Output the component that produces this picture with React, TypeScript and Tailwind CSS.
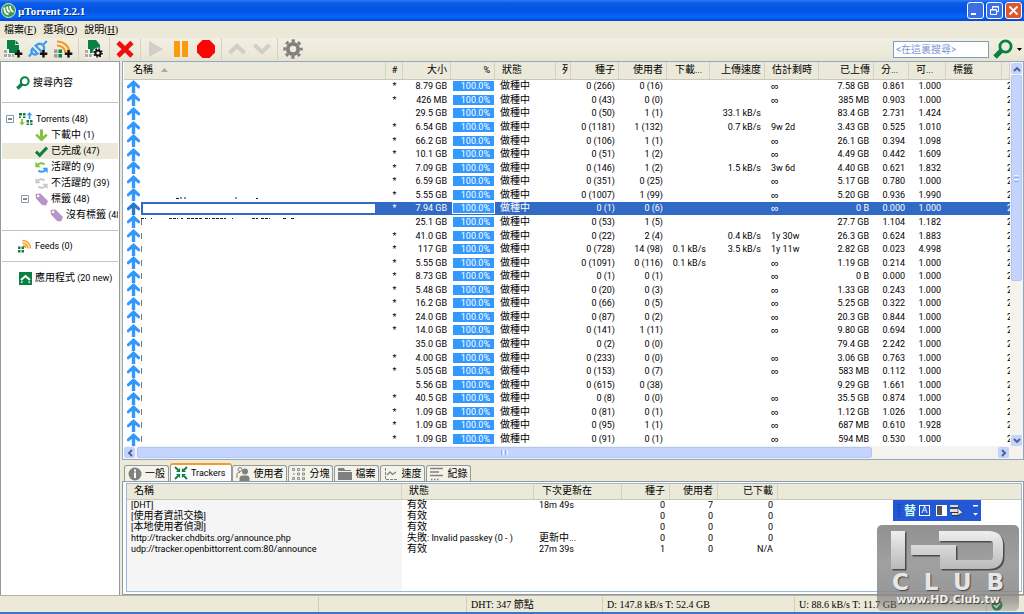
import React from "react";

const CJK = /([\u3000-\u9fff]+)/;

function Mix({ text }: { text: string }) {
  return (
    <>
      {text.split(CJK).map((part, i) =>
        CJK.test(part) ? (
          <span key={i} className="text-[10px] leading-none">
            {part}
          </span>
        ) : (
          part
        ),
      )}
    </>
  );
}

/* ---------- icons ---------- */

const GREEN = "#0b8043";

function Plus() {
  return <path d="M15.500 11v7.500M11.800 14.700h7.500" stroke="#111" strokeWidth="2.400" />;
}

function AddFileIcon() {
  return (
    <svg width="20" height="20" viewBox="0 0 20 20">
      <path d="M4 1h8v5h4v8H4z" fill={GREEN} />
      <path d="M12.500 1L16 5h-3.500z" fill={GREEN} />
      <path d="M1 10h5v4h4v5H1z" fill="#f5f4ee" />
      <path d="M1 11h3v3H1zM1 15h3v3H1zM5 15h3v3H5zM9 15h2v3H9z" fill="#a9a9a9" />
      <Plus />
    </svg>
  );
}

function AddLinkIcon() {
  return (
    <svg width="20" height="20" viewBox="0 0 20 20" fill="none">
      <g stroke="#3d9bf2" strokeWidth="2.200">
        <path d="M.8 17.500L4 14" />
        <path d="M4.500 9.500c-1.500 1.800-1.200 3.800 0 5s3.200 1.300 5 0z" />
        <path d="M7.500 6.800l6.500 6c2.600-2.200 2.800-4.800 1-6.600s-4.800-1.800-7.500.6z" />
        <path d="M15.500 5.500L18.800 2" />
      </g>
      <Plus />
    </svg>
  );
}

function AddFeedIcon() {
  return (
    <svg width="20" height="20" viewBox="0 0 20 20" fill="none">
      <g stroke="#f79a1c" strokeWidth="2.200">
        <path d="M4 2.500c7 0 12.500 5 12.500 12" />
        <path d="M4 6.500c4.500 0 8 3 8.500 7" />
      </g>
      <path d="M1 10.500h3.500V14H1zM1 15h3.500v3.500H1z" fill="#9b9b9b" />
      <path d="M5.500 10.500H9V14H5.500zM5.500 15H9v3.500H5.500z" fill={GREEN} />
      <Plus />
    </svg>
  );
}

function CreateIcon() {
  return (
    <svg width="20" height="20" viewBox="0 0 20 20">
      <path d="M4 1h8l4 5v8H4z" fill={GREEN} />
      <path d="M1 10h5v4h4v5H1z" fill="#f5f4ee" />
      <path d="M1 11h3v3H1zM1 15h3v3H1zM5 15h3v3H5z" fill="#a9a9a9" />
      <circle cx="14" cy="14" r="5.500" fill="#f5f4ee" />
      <circle cx="14" cy="14" r="2.600" fill="none" stroke="#111" strokeWidth="2" />
      <circle cx="14" cy="14" r="4" fill="none" stroke="#111" strokeWidth="1.600" strokeDasharray="1.600 1.540" />
    </svg>
  );
}

function RemoveIcon() {
  return (
    <svg width="18" height="18" viewBox="0 0 18 18">
      <path d="M2 2.500l14 13.500M16 2.500L2 16" stroke="#f10d0d" strokeWidth="4.600" />
    </svg>
  );
}

function PlayIcon() {
  return (
    <svg width="16" height="18" viewBox="0 0 16 18">
      <path d="M1 1l14 8-14 8z" fill="#d0cfca" />
    </svg>
  );
}

function PauseIcon() {
  return (
    <svg width="16" height="18" viewBox="0 0 16 18">
      <path d="M1 1h6v16H1zM9 1h6v16H9z" fill="#fb9a0a" />
    </svg>
  );
}

function StopIcon() {
  return (
    <svg width="18" height="18" viewBox="0 0 18 18">
      <path d="M5.500 0h7L18 5.500v7L12.500 18h-7L0 12.500v-7z" fill="#fb0505" />
    </svg>
  );
}

function ChevronIcon({ down }: { down?: boolean }) {
  return (
    <svg width="20" height="18" viewBox="0 0 20 18" fill="none">
      <path d={down ? "M2.500 5L10 12l7.500-7" : "M2.500 13L10 6l7.500 7"} stroke="#cfcec8" strokeWidth="4" />
    </svg>
  );
}

function GearIcon() {
  return (
    <svg width="20" height="20" viewBox="0 0 20 20" fill="none" stroke="#808080">
      <circle cx="10" cy="10" r="5.200" strokeWidth="3.800" />
      <circle cx="10" cy="10" r="8.400" strokeWidth="2.600" strokeDasharray="3.300 3.297" strokeDashoffset="1.650" />
    </svg>
  );
}

function SearchIcon({ size }: { size: number }) {
  return (
    <svg width={size} height={size} viewBox="0 0 20 20" fill="none" stroke={GREEN}>
      <circle cx="12.500" cy="7.500" r="5.600" strokeWidth="2.800" />
      <path d="M8.500 11.500L2 18" strokeWidth="5" />
    </svg>
  );
}

function LogoIcon() {
  return (
    <svg width="15" height="15" viewBox="0 0 15 15" fill="none">
      <circle cx="7.500" cy="7.500" r="7" fill="#3f9b4d" stroke="#d5ecd2" />
      <path d="M3.200 4.500c.2 5 1.800 7 4.300 6.300M6 3.600c.4 4 1.400 5.400 3 5M9 3c.3 3.600 1.400 5.500 3.500 5.800" stroke="#fff" strokeWidth="1.800" />
    </svg>
  );
}

function ArrowUp({ selected }: { selected?: boolean }) {
  return (
    <svg width="13" height="13" viewBox="0 0 13 13" className="block">
      <path d="M6.500 0L13 6v1.500L12 8.700 8.200 6V13H4.800V6L1 8.700 0 7.500V6z" fill={selected ? "#2a78d0" : "#3398fb"} />
    </svg>
  );
}

function ArrowDownGreen() {
  return (
    <svg width="13" height="13" viewBox="0 0 13 13">
      <path d="M6.500 12.500L.3 6.500 2 4.800l3 2.400V.5h3v6.700l3-2.400 1.700 1.700z" fill="#83c43c" />
    </svg>
  );
}

function CheckIcon() {
  return (
    <svg width="13" height="13" viewBox="0 0 13 13">
      <path d="M1 6.500l3.700 3.800L12 2.500" fill="none" stroke={GREEN} strokeWidth="3.200" />
    </svg>
  );
}

function CycleIcon({ a, b }: { a: string; b: string }) {
  return (
    <svg width="13" height="13" viewBox="0 0 13 13" fill="none">
      <path d="M2.500 4.300C4 1.800 7.500 1.500 9.500 3.500" stroke={a} strokeWidth="2.100" />
      <path d="M.4.800v5.400h5.400z" fill={a} />
      <path d="M10.500 8.700C9 11.200 5.500 11.500 3.500 9.500" stroke={b} strokeWidth="2.100" />
      <path d="M12.600 12.200V6.800H7.200z" fill={b} />
    </svg>
  );
}

function TagIcon() {
  return (
    <svg width="13" height="13" viewBox="0 0 13 13">
      <path d="M.5 1l5-.5L13 8l-2 4.500-4-.5L1 5.500z" fill="#b795c8" />
      <circle cx="3.200" cy="3" r="1.200" fill="#fff" />
    </svg>
  );
}

function TorrentsIcon() {
  return (
    <svg width="14" height="14" viewBox="0 0 14 14">
      <path d="M0 1h3v2.500H0zM4 1h2.500v2.500H4zM0 4.500h2V6H0zM4 4.500h2.500V6H4zM7.500 8H10v2.500H7.500zM11 8h2.500v2.500H11zM7.500 11.500H10V13H7.500zM11 11.500h2.500V13H11z" fill={GREEN} />
      <path d="M10.500 0l2.800 3.200h-1.900V7H9.600V3.200H7.700z" fill="#3d9bf2" />
      <path d="M3 13.500L.2 10.300h1.900V7h1.800v3.300h1.900z" fill="#83c43c" />
    </svg>
  );
}

function FeedsIcon() {
  return (
    <svg width="14" height="14" viewBox="0 0 14 14" fill="none">
      <path d="M4.500 1.500c4.500 0 8 3.500 8 8M4.500 4c3 0 5.500 2.500 5.500 5.500M5 6.500c1.500 0 2.500 1 2.500 2.500" stroke="#f79a1c" strokeWidth="1.500" />
      <path d="M0 7.500h2.500V10H0zM3.500 7.500H6V10H3.500zM0 11h2.500v2.500H0zM3.500 11H6v2.500H3.500z" fill={GREEN} />
    </svg>
  );
}

function AppsIcon() {
  return (
    <svg width="13" height="13" viewBox="0 0 13 13" fill="none">
      <path d="M0 0h13v13H0z" fill={GREEN} />
      <path d="M2 8l4.500-4L11 8" stroke="#fff" strokeWidth="2" />
      <path d="M2 10.800l1.500-1.500M11 10.800L9.500 9.300" stroke="#fff" strokeWidth="1.200" />
    </svg>
  );
}

function MinusBox() {
  return (
    <svg width="8" height="8" viewBox="0 0 8 8">
      <path d="M.5.5h7v7h-7z" fill="#fff" stroke="#7f9db9" />
      <path d="M2 4h4" stroke="#111" />
    </svg>
  );
}

/* ---------- data ---------- */

type Row = [string, string, string, string, string, string, string, string, string, string];

// marker, size, seeds, peers, down, up, eta, uploaded, ratio, availability
const rows: Row[] = [
  ["*", "8.79 GB", "0 (266)", "0 (16)", "", "", "∞", "7.58 GB", "0.861", "1.000"],
  ["*", "426 MB", "0 (43)", "0 (0)", "", "", "∞", "385 MB", "0.903", "1.000"],
  ["", "29.5 GB", "0 (50)", "1 (1)", "", "33.1 kB/s", "", "83.4 GB", "2.731", "1.424"],
  ["*", "6.54 GB", "0 (1181)", "1 (132)", "", "0.7 kB/s", "9w 2d", "3.43 GB", "0.525", "1.010"],
  ["*", "66.2 GB", "0 (106)", "1 (1)", "", "", "∞", "26.1 GB", "0.394", "1.098"],
  ["*", "10.1 GB", "0 (51)", "1 (2)", "", "", "∞", "4.49 GB", "0.442", "1.609"],
  ["*", "7.09 GB", "0 (146)", "1 (2)", "", "1.5 kB/s", "3w 6d", "4.40 GB", "0.621", "1.832"],
  ["*", "6.59 GB", "0 (351)", "0 (25)", "", "", "∞", "5.17 GB", "0.780", "1.000"],
  ["*", "5.55 GB", "0 (1007)", "1 (99)", "", "", "∞", "5.20 GB", "0.936", "1.990"],
  ["*", "7.94 GB", "0 (1)", "0 (6)", "", "", "∞", "0 B", "0.000", "1.000"],
  ["", "25.1 GB", "0 (53)", "1 (5)", "", "", "", "27.7 GB", "1.104", "1.182"],
  ["*", "41.0 GB", "0 (22)", "2 (4)", "", "0.4 kB/s", "1y 30w", "26.3 GB", "0.624", "1.883"],
  ["*", "117 GB", "0 (728)", "14 (98)", "0.1 kB/s", "3.5 kB/s", "1y 11w", "2.82 GB", "0.023", "4.998"],
  ["*", "5.55 GB", "0 (1091)", "0 (116)", "0.1 kB/s", "", "∞", "1.19 GB", "0.214", "1.000"],
  ["*", "8.73 GB", "0 (1)", "0 (1)", "", "", "∞", "0 B", "0.000", "1.000"],
  ["*", "5.48 GB", "0 (20)", "0 (3)", "", "", "∞", "1.33 GB", "0.243", "1.000"],
  ["*", "16.2 GB", "0 (66)", "0 (5)", "", "", "∞", "5.25 GB", "0.322", "1.000"],
  ["*", "24.0 GB", "0 (87)", "0 (2)", "", "", "∞", "20.3 GB", "0.844", "1.000"],
  ["*", "14.0 GB", "0 (141)", "1 (11)", "", "", "∞", "9.80 GB", "0.694", "1.000"],
  ["", "35.0 GB", "0 (2)", "0 (0)", "", "", "", "79.4 GB", "2.242", "1.000"],
  ["*", "4.00 GB", "0 (233)", "0 (0)", "", "", "∞", "3.06 GB", "0.763", "1.000"],
  ["*", "5.05 GB", "0 (153)", "0 (7)", "", "", "∞", "583 MB", "0.112", "1.000"],
  ["", "5.56 GB", "0 (615)", "0 (38)", "", "", "", "9.29 GB", "1.661", "1.000"],
  ["*", "40.5 GB", "0 (8)", "0 (0)", "", "", "∞", "35.5 GB", "0.874", "1.000"],
  ["*", "1.09 GB", "0 (81)", "0 (1)", "", "", "∞", "1.12 GB", "1.026", "1.000"],
  ["*", "1.09 GB", "0 (95)", "1 (1)", "", "", "∞", "687 MB", "0.610", "1.928"],
  ["*", "1.09 GB", "0 (91)", "0 (1)", "", "", "∞", "594 MB", "0.530", "1.000"],
];

const SELECTED = 9;

const columns: { label: string; width: string; cls: string }[] = [
  { label: "名稱", width: "w-auto", cls: "pl-[9px] text-left" },
  { label: "#", width: "w-[17px]", cls: "text-center" },
  { label: "大小", width: "w-[48px]", cls: "pr-1 text-right" },
  { label: "%", width: "w-[44px]", cls: "pr-[5px] text-right" },
  { label: "狀態", width: "w-[61px]", cls: "pl-[7px] text-left" },
  { label: "列", width: "w-[15px]", cls: "pl-[6px] pr-[3px]" },
  { label: "種子", width: "w-[48px]", cls: "pr-1 text-right" },
  { label: "使用者", width: "w-[48px]", cls: "pr-1 text-right" },
  { label: "下載...", width: "w-[43px]", cls: "pl-[8px] text-left" },
  { label: "上傳速度", width: "w-[55px]", cls: "pr-1 text-right" },
  { label: "估計剩時", width: "w-[54px]", cls: "pl-[7px] text-left" },
  { label: "已上傳", width: "w-[55px]", cls: "pr-1 text-right" },
  { label: "分...", width: "w-[35px]", cls: "pl-[7px] text-left" },
  { label: "可...", width: "w-[37px]", cls: "pl-[7px] text-left" },
  { label: "標籤", width: "w-[56px]", cls: "pl-[7px] text-left" },
  { label: "", width: "w-[8px]", cls: "" },
];

const trackers = [
  ["[DHT]", "有效", "18m 49s", "0", "7", "0"],
  ["[使用者資訊交換]", "有效", "", "0", "0", "0"],
  ["[本地使用者偵測]", "有效", "", "0", "0", "0"],
  ["http://tracker.chdbits.org/announce.php", "失敗: Invalid passkey (0 - )", "更新中...", "0", "0", "0"],
  ["udp://tracker.openbittorrent.com:80/announce", "有效", "27m 39s", "1", "0", "N/A"],
];

const trackerColumns = [
  { label: "名稱", width: "w-[275px]", cls: "pl-[7px] text-left" },
  { label: "狀態", width: "w-[132px]", cls: "pl-[7px] text-left" },
  { label: "下次更新在", width: "w-[88px]", cls: "pl-[8px] text-left" },
  { label: "種子", width: "w-[48px]", cls: "pr-[5px] text-right" },
  { label: "使用者", width: "w-[48px]", cls: "pr-[5px] text-right" },
  { label: "已下載", width: "w-[60px]", cls: "pr-[5px] text-right" },
];

/* ---------- sections ---------- */

function TitleBar() {
  return (
    <header className="flex h-[21px] shrink-0 items-center gap-[2px] bg-[linear-gradient(to_bottom,#2f7bf5_0px,#0a5bea_3px,#0453e0_10px,#0565fb_17px,#0347c8_21px)] pr-[2px] pl-[1px]">
      <LogoIcon />
      <h1 className="grow font-['Liberation_Serif',serif] text-[11px] leading-[14px] font-bold text-white [text-shadow:1px_1px_0_#0a2f8a]">
        µTorrent 2.2.1
      </h1>
      <div className="flex gap-[2px]">
        <button aria-label="Minimize" className="flex size-[17px] items-center justify-center rounded-[3px] border border-white bg-[#3c6fe6]">
          <svg width="11" height="11" viewBox="0 0 11 11">
            <path d="M1 9h5" stroke="#fff" strokeWidth="2" />
          </svg>
        </button>
        <button aria-label="Restore" className="flex size-[17px] items-center justify-center rounded-[3px] border border-white bg-[#3c6fe6]">
          <svg width="11" height="11" viewBox="0 0 11 11" fill="none" stroke="#fff">
            <path d="M3.500 4V1.500h6v5H7.500M3.500 2h6" />
            <path d="M1.500 4.500h6v5h-6zM1.500 5h6" />
          </svg>
        </button>
        <button aria-label="Close" className="flex size-[17px] items-center justify-center rounded-[3px] border border-white bg-[#dd5630]">
          <svg width="11" height="11" viewBox="0 0 11 11">
            <path d="M1.500 1.500l8 8M9.500 1.500l-8 8" stroke="#fff" strokeWidth="1.800" />
          </svg>
        </button>
      </div>
    </header>
  );
}

function MenuBar() {
  const items = [
    ["檔案", "F"],
    ["選項", "O"],
    ["說明", "H"],
  ];
  return (
    <nav className="flex h-[17px] shrink-0 items-center gap-[7px] bg-[#ece9d8] pl-1">
      {items.map(([label, key]) => (
        <button key={key} className="font-['Liberation_Serif','Noto_Sans_CJK_TC',serif] text-[10px] leading-[16px]">
          {label}(<u>{key}</u>)
        </button>
      ))}
    </nav>
  );
}

function Sep() {
  return <span className="h-[22px] w-px bg-[#d5d2c4]" />;
}

function Tool({ label, children }: { label: string; children: React.ReactNode }) {
  return (
    <button aria-label={label} className="flex w-5 items-center justify-center">
      {children}
    </button>
  );
}

function Toolbar() {
  return (
    <div className="flex h-[23px] shrink-0 items-center bg-[linear-gradient(to_bottom,#f1efe2,#ece9d8_70%,#e6e3d2)] pr-[2px] pb-px pl-[3px]">
      <div className="flex items-center gap-[5px]">
        <Tool label="Add torrent"><AddFileIcon /></Tool>
        <Tool label="Add torrent from URL"><AddLinkIcon /></Tool>
        <Tool label="Add RSS feed"><AddFeedIcon /></Tool>
        <Sep />
        <Tool label="Create torrent"><CreateIcon /></Tool>
        <Sep />
        <Tool label="Remove"><RemoveIcon /></Tool>
        <Sep />
        <Tool label="Start"><PlayIcon /></Tool>
        <Tool label="Pause"><PauseIcon /></Tool>
        <Tool label="Stop"><StopIcon /></Tool>
        <Sep />
        <Tool label="Move up"><ChevronIcon /></Tool>
        <Tool label="Move down"><ChevronIcon down /></Tool>
        <Sep />
        <Tool label="Preferences"><GearIcon /></Tool>
      </div>
      <div className="ml-auto flex items-center gap-1">
        <input
          aria-label="搜尋"
          placeholder="<在這裏搜尋>"
          className="h-[17px] w-[96px] border border-[#7f9db9] bg-white px-[2px] text-[10px] leading-[14px] placeholder:text-[#7f95d6]"
        />
        <button aria-label="Search"><SearchIcon size={20} /></button>
        <svg width="5" height="3" viewBox="0 0 5 3"><path d="M0 0h5L2.500 3z" /></svg>
      </div>
    </div>
  );
}

function TreeItem({
  indent,
  icon,
  label,
  active,
  expandable,
}: {
  indent: string;
  icon: React.ReactNode;
  label: string;
  active?: boolean;
  expandable?: boolean;
}) {
  return (
    <button
      className={`flex h-4 w-full shrink-0 items-center gap-[3px] overflow-hidden whitespace-nowrap ${indent} ${active ? "bg-[#ece9d8]" : ""}`}
    >
      {expandable && <span className="pr-[2px]"><MinusBox /></span>}
      <span className="flex w-[14px] shrink-0 justify-center">{icon}</span>
      <span className="leading-[14px]">
        <Mix text={label} />
      </span>
    </button>
  );
}

function Sidebar() {
  return (
    <aside className="flex w-[120px] shrink-0 flex-col overflow-hidden border-x border-t border-[#8f9ca6] bg-white px-px">
      <div className="border-b border-[#c5c5c0] pt-[13px] pb-[11px]">
        <TreeItem indent="pl-[14px]" icon={<SearchIcon size={14} />} label="搜尋內容" />
      </div>
      <div className="border-b border-[#c5c5c0] pt-[8px] pb-[7px]">
        <TreeItem expandable indent="pl-1" icon={<TorrentsIcon />} label="Torrents (48)" />
        <TreeItem indent="pl-[32px]" icon={<ArrowDownGreen />} label="下載中 (1)" />
        <TreeItem active indent="pl-[32px]" icon={<CheckIcon />} label="已完成 (47)" />
        <TreeItem indent="pl-[32px]" icon={<CycleIcon a="#83c43c" b="#3d9bf2" />} label="活躍的 (9)" />
        <TreeItem indent="pl-[32px]" icon={<CycleIcon a="#c9c9c9" b="#c9c9c9" />} label="不活躍的 (39)" />
        <TreeItem expandable indent="pl-[19px]" icon={<TagIcon />} label="標籤 (48)" />
        <TreeItem indent="pl-[47px]" icon={<TagIcon />} label="沒有標籤 (48)" />
      </div>
      <div className="border-b border-[#c5c5c0] py-[7px]">
        <TreeItem indent="pl-[16px]" icon={<FeedsIcon />} label="Feeds (0)" />
      </div>
      <div className="pt-[8px]">
        <TreeItem indent="pl-[16px]" icon={<AppsIcon />} label="應用程式 (20 new)" />
      </div>
    </aside>
  );
}

function ScrollButton({ label, d }: { label: string; d: string }) {
  return (
    <button aria-label={label} className="flex size-[11px] shrink-0 items-center justify-center rounded-[2px] bg-[#c3d3fd]">
      <svg width="8" height="8" viewBox="0 0 8 8" fill="none">
        <path d={d} stroke="#4d6185" strokeWidth="1.900" />
      </svg>
    </button>
  );
}

// Remnants of the file names that show around the blanked-out area.
function NameRemnants() {
  return (
    <svg width="180" height="24" viewBox="0 0 180 24" className="absolute top-[135px] left-4" fill="none">
      <path d="M36 1.500h3M41 0v2M44 1h2M96 0v2M116 1.500h2" stroke="#222" />
      <path
        d="M1 21.500h5M11 21.500h1M29 21.500h9M41 21.500h2M47 21.500h16M65 21.500h5M72 21.500h14M92 21.500h1M112 21.500h6M121 21.500h9M143 21.500h3M151 21.500h4"
        stroke="#222"
        strokeDasharray="3 1"
      />
    </svg>
  );
}

function NameCell({ index }: { index: number }) {
  const selected = index === SELECTED;
  return (
    <td className="p-0 pl-[3px]">
      <div className="flex items-center gap-px">
        <ArrowUp selected={selected} />
        {selected ? (
          <div className="h-[13px] grow bg-[#316ac5] py-[2px] pr-[11px] pl-[2px]">
            <div className="h-full bg-white" />
          </div>
        ) : (
          index > 9 && <span className="h-[6px] w-px bg-[#777]" />
        )}
      </div>
    </td>
  );
}

function TorrentTable() {
  return (
    <table className="h-full w-full table-fixed border-collapse whitespace-nowrap">
      <colgroup>
        {columns.map((c, i) => (
          <col key={i} className={c.width} />
        ))}
      </colgroup>
      <thead>
        <tr className="h-[17px] bg-[#ebe9da]">
          {columns.map((c, i) => (
            <th
              key={i}
              className={`overflow-hidden border-b border-[#cbc7b8] p-0 leading-[15px] font-normal [box-shadow:inset_-1px_0_0_#d6d2c2] ${c.cls}`}
            >
              {i === 0 ? (
                <span className="inline-flex items-center gap-2">
                  <Mix text={c.label} />
                  <svg width="7" height="4" viewBox="0 0 7 4"><path d="M0 4h7L3.500 0z" fill="#aca899" /></svg>
                </span>
              ) : c.label === "列" ? (
                <div className="overflow-hidden text-left">
                  <Mix text={c.label} />
                </div>
              ) : (
                <Mix text={c.label} />
              )}
            </th>
          ))}
        </tr>
      </thead>
      <tbody>
        {rows.map((r, i) => {
          const sel = i === SELECTED;
          const c = sel ? "bg-[#316ac5] text-white" : "";
          return (
            <tr key={i} className="leading-[12px]">
              <NameCell index={i} />
              <td className={`p-0 text-center ${c}`}>{r[0]}</td>
              <td className={`p-0 pr-1 text-right ${c}`}>{r[1]}</td>
              <td className={`p-0 pr-px pl-[2px] ${c}`}>
                <div className={`h-[10px] bg-[#3399ff] pr-1 text-right leading-[10px] text-white ${sel ? "outline outline-white" : ""}`}>
                  100.0%
                </div>
              </td>
              <td className={`p-0 pl-[5px] ${c}`}><Mix text="做種中" /></td>
              <td className={`p-0 ${c}`} />
              <td className={`p-0 pr-1 text-right ${c}`}>{r[2]}</td>
              <td className={`p-0 pr-1 text-right ${c}`}>{r[3]}</td>
              <td className={`p-0 pr-1 text-right ${c}`}>{r[4]}</td>
              <td className={`p-0 pr-1 text-right ${c}`}>{r[5]}</td>
              <td className={`p-0 pl-[6px] ${r[6] === "∞" ? "font-['Liberation_Sans',sans-serif] text-[11px]" : ""} ${c}`}>{r[6]}</td>
              <td className={`p-0 pr-[5px] text-right ${c}`}>{r[7]}</td>
              <td className={`p-0 pr-1 text-right ${c}`}>{r[8]}</td>
              <td className={`p-0 pr-[5px] text-right ${c}`}>{r[9]}</td>
              <td className={`p-0 ${c}`} />
              <td className={`overflow-hidden p-0 pl-[5px] ${c}`}>2</td>
            </tr>
          );
        })}
      </tbody>
    </table>
  );
}

function TorrentPanel() {
  return (
    <section className="flex min-h-0 grow flex-col border border-[#8fa9c4] bg-white pl-px">
      <div className="flex min-h-0 grow">
        <div className="relative min-w-0 grow overflow-hidden">
          <TorrentTable />
          <NameRemnants />
        </div>
        <div className="flex w-[13px] shrink-0 flex-col items-center gap-px bg-[#f4f3ee] pt-px">
          <ScrollButton label="Scroll up" d="M1 6l3-3 3 3" />
          <div className="flex h-[206px] w-[11px] flex-col items-center justify-center gap-px rounded-[2px] border border-[#b2c5f8] bg-[#c5d4fd]">
            <span className="h-px w-[5px] bg-[#eef4fe]" />
            <span className="h-px w-[5px] bg-[#8cb0f8]" />
            <span className="h-px w-[5px] bg-[#eef4fe]" />
            <span className="h-px w-[5px] bg-[#8cb0f8]" />
          </div>
          <div className="grow" />
          <ScrollButton label="Scroll down" d="M1 2l3 3 3-3" />
        </div>
      </div>
      <div className="flex h-[13px] shrink-0 items-center gap-[2px] bg-[#f4f3ee] pr-[14px]">
        <ScrollButton label="Scroll left" d="M6 1L3 4l3 3" />
        <div className="flex h-[11px] w-[83%] items-center justify-center gap-px rounded-[2px] border border-[#b2c5f8] bg-[#c5d4fd]">
          <span className="h-[5px] w-px bg-[#8cb0f8]" />
          <span className="h-[5px] w-px bg-[#eef4fe]" />
          <span className="h-[5px] w-px bg-[#8cb0f8]" />
          <span className="h-[5px] w-px bg-[#eef4fe]" />
        </div>
        <div className="grow" />
        <ScrollButton label="Scroll right" d="M2 1l3 3-3 3" />
      </div>
    </section>
  );
}

const tabIcons: Record<string, React.ReactNode> = {
  一般: (
    <svg width="14" height="14" viewBox="0 0 14 14">
      <circle cx="7" cy="7" r="6.500" fill="#808080" />
      <path d="M7 2.500v2M7 5.500v5.500" stroke="#fff" strokeWidth="2" />
    </svg>
  ),
  Trackers: (
    <svg width="14" height="14" viewBox="0 0 14 14" fill="none" stroke={GREEN} strokeWidth="1.800">
      <path d="M1 1l4.500 4.500M13 1L8.500 5.500M1 13l4.500-4.500M13 13L8.500 8.500" />
      <path d="M2.500 5.500h3v-3M11.500 5.500h-3v-3M2.500 8.500h3v3M11.500 8.500h-3v3" strokeWidth="1.200" />
    </svg>
  ),
  使用者: (
    <svg width="14" height="14" viewBox="0 0 14 14" fill="#808080">
      <circle cx="4" cy="2.500" r="2" fill="none" stroke="#808080" />
      <path d="M1 11V7c0-1 1-1.500 3-1.500" fill="none" stroke="#808080" />
      <circle cx="9" cy="4.500" r="3" />
      <path d="M3.500 14v-2.500c0-2 1.500-3 3-3h4c2 0 3 1.200 3 3V14z" />
    </svg>
  ),
  分塊: (
    <svg width="14" height="14" viewBox="0 0 14 14" fill="none" stroke="#8d8d8d">
      <path d="M.5 1.500h2v2h-2zM5.500 1.500h2v2h-2zM10.500 1.500h2v2h-2zM.5 10.500h2v2h-2zM5.500 10.500h2v2h-2zM10.500 10.500h2v2h-2zM5.500 6h2v2h-2zM10.500 6h2v2h-2zM1 7h2" />
    </svg>
  ),
  檔案: (
    <svg width="14" height="14" viewBox="0 0 14 14" fill="#808080">
      <path d="M0 1h6l1 2h6v1H0zM0 5h14v8H0z" />
    </svg>
  ),
  速度: (
    <svg width="14" height="14" viewBox="0 0 14 14" fill="none" stroke="#808080">
      <path d="M1.500 1v11.500H13" strokeDasharray="3 1" />
      <path d="M3 8l3-3 2.500 2.500L12 5" strokeWidth="1.300" />
    </svg>
  ),
  紀錄: (
    <svg width="14" height="14" viewBox="0 0 14 14" fill="none" stroke="#808080" strokeWidth="1.400">
      <path d="M0 1.500h13M0 5h9M0 8.500h13" />
      <path d="M1 12.500h8" strokeDasharray="1.500 1.500" />
    </svg>
  ),
};

function Tabs() {
  return (
    <div role="tablist" className="flex h-[21px] shrink-0 items-end pl-[2px]">
      {Object.keys(tabIcons).map((label) => {
        const active = label === "Trackers";
        return (
          <button
            key={label}
            role="tab"
            aria-selected={active}
            className={`flex items-center gap-[3px] rounded-t-[3px] border-x pl-[3px] leading-[14px] whitespace-nowrap ${
              active
                ? "h-[18px] border-t-2 border-x-[#919b9c] border-t-[#f59b23] bg-[#fcfcfe] pr-[6px]"
                : "mr-px h-4 border-t border-[#919b9c] bg-[#f4f3ea] pr-[3px]"
            }`}
          >
            {tabIcons[label]}
            <Mix text={label} />
          </button>
        );
      })}
    </div>
  );
}

function DetailPanel() {
  return (
    <section className="h-[114px] shrink-0 border border-[#919b9c] bg-[#fcfcfe] pt-px pr-px pb-[2px] pl-[3px]">
      <div className="h-full overflow-hidden border border-[#9fb8d4] bg-[linear-gradient(to_right,#f5f5f5_275px,#fff_275px)]">
        <table className="w-full table-fixed border-collapse whitespace-nowrap">
          <colgroup>
            {trackerColumns.map((c) => (
              <col key={c.label} className={c.width} />
            ))}
            <col className="w-auto" />
          </colgroup>
          <thead>
            <tr className="h-[15px] bg-[#ebe9da]">
              {trackerColumns.map((c) => (
                <th
                  key={c.label}
                  className={`border-b border-[#cbc7b8] p-0 leading-[13px] font-normal [box-shadow:inset_-1px_0_0_#d6d2c2] ${c.cls}`}
                >
                  <Mix text={c.label} />
                </th>
              ))}
              <th className="border-b border-[#cbc7b8] p-0" />
            </tr>
          </thead>
          <tbody>
            {trackers.map((t) => (
              <tr key={t[0]} className="h-[11px] leading-[11px]">
                {t.map((v, i) => (
                  <td key={i} className={`p-0 ${i > 2 ? "pr-[5px] text-right" : i === 0 ? "pl-1" : "pl-[5px]"}`}>
                    <Mix text={v} />
                  </td>
                ))}
                <td className="p-0" />
              </tr>
            ))}
          </tbody>
        </table>
      </div>
    </section>
  );
}

function StatusBar() {
  const cell = "flex h-full items-center border-l border-[#cfccbc] pl-1 whitespace-nowrap";
  return (
    <footer className="shrink-0 border-t border-b-2 border-t-[#b5b2a4] border-b-[#3a78c4] bg-[#ece9d8]">
      <div className="flex h-4 items-center pt-px font-['Liberation_Serif','Noto_Sans_CJK_TC',serif] text-[10px] leading-[14px]">
        <div className="grow" />
        <div className={`${cell} w-[148px]`} />
        <div className={`${cell} w-[136px]`}>DHT: 347 節點</div>
        <div className={`${cell} w-[192px]`}>D: 147.8 kB/s T: 52.4 GB</div>
        <div className={`${cell} w-[192px]`}>U: 88.6 kB/s T: 11.7 GB</div>
        <div className={`${cell} w-[38px]`}>
          <svg width="12" height="12" viewBox="0 0 12 12">
            <circle cx="6" cy="6" r="5.500" fill="#0a7a30" />
            <path d="M3 6l2.300 2.300L9 4" fill="none" stroke="#fff" strokeWidth="1.500" />
          </svg>
        </div>
      </div>
    </footer>
  );
}

function LanguageBar() {
  return (
    <div className="absolute right-[43px] bottom-[93px] flex h-[21px] w-[88px] items-center gap-[3px] bg-[#2258d6] pr-[3px] pl-1">
      <svg width="4" height="13" viewBox="0 0 4 13">
        <path d="M1 0v13M3 0v13" stroke="#123a9c" strokeDasharray="1.500 1.500" />
      </svg>
      <button className="w-3 text-[12px] leading-[14px] font-bold text-[#c9fbf0]">替</button>
      <button className="flex size-[11px] items-center justify-center border border-white text-[9px] leading-[9px] text-white">A</button>
      <button aria-label="Width mode" className="pl-[3px]">
        <svg width="11" height="11" viewBox="0 0 11 11">
          <path d="M0 0h11v11H0z" fill="#fff" />
          <path d="M1 1h5v9H1z" fill="#555" />
        </svg>
      </button>
      <button aria-label="Tools">
        <svg width="13" height="13" viewBox="0 0 13 13">
          <path d="M0 1h8v2H0zM0 5h9v3H0zM2 9h7v2H2z" fill="#ddd" />
          <path d="M0 4h9M1 8.500h8M2 11.500h8" stroke="#333" />
          <path d="M8 4l5 5-3 .5L8 12z" fill="#eee" stroke="#333" strokeWidth=".6" />
        </svg>
      </button>
      <svg width="5" height="13" viewBox="0 0 5 13" className="ml-auto">
        <path d="M0 1h5v1.500H0zM0 9h5L2.500 11.500z" fill="#fff" />
      </svg>
    </div>
  );
}

function Watermark() {
  return (
    <div className="absolute right-[5px] bottom-[3px] flex h-[86px] w-[142px] flex-col items-center rounded-[5px] bg-[linear-gradient(to_bottom,#858585e6,#969696e6_45%,#8a8a8ae0_78%,#77777799_88%,#77777755)] pt-[6px]">
      <svg width="116" height="41" viewBox="0 0 116 41" role="img" aria-label="HD">
        <defs>
          <linearGradient id="metal" x1="0" y1="0" x2="0" y2="1">
            <stop offset="0" stopColor="#eeeeee" />
            <stop offset="1" stopColor="#b9b9b9" />
          </linearGradient>
        </defs>
        <g transform="translate(1.500 1.500)" fill="#4c4c4c">
          <path d="M1 0h14v38H1z" />
          <path d="M21 14h45v15h34q3 0 3-3V13q0-3-3-3H49V0h49q15 0 15 14v10q0 14-15 14H50V24H21z" />
        </g>
        <g fill="url(#metal)">
          <path d="M1 0h14v38H1z" />
          <path d="M21 14h45v15h34q3 0 3-3V13q0-3-3-3H49V0h49q15 0 15 14v10q0 14-15 14H50V24H21z" />
        </g>
      </svg>
      <div className="flex w-[112px] justify-between font-['DejaVu_Sans',sans-serif] text-[23px] leading-[21px] font-bold text-[#e6e6e6] [text-shadow:1px_1px_1px_#444]">
        <span>C</span>
        <span>L</span>
        <span>U</span>
        <span>B</span>
      </div>
      <div className="font-['DejaVu_Sans',sans-serif] text-[11px] leading-[14px] font-bold text-[#f0f0f0] [text-shadow:1px_1px_1px_#333]">
        www.HD.Club.tw
      </div>
    </div>
  );
}

export default function App() {
  return (
    <div className="relative flex h-screen flex-col overflow-hidden bg-[#ece9d8] font-['Roboto','Noto_Sans_CJK_TC',sans-serif] text-[9px] leading-[12px] text-black">
      <TitleBar />
      <MenuBar />
      <Toolbar />
      <main className="flex min-h-0 grow gap-[2px]">
        <Sidebar />
        <div className="flex min-w-0 grow flex-col">
          <TorrentPanel />
          <Tabs />
          <DetailPanel />
        </div>
      </main>
      <StatusBar />
      <LanguageBar />
      <Watermark />
    </div>
  );
}
